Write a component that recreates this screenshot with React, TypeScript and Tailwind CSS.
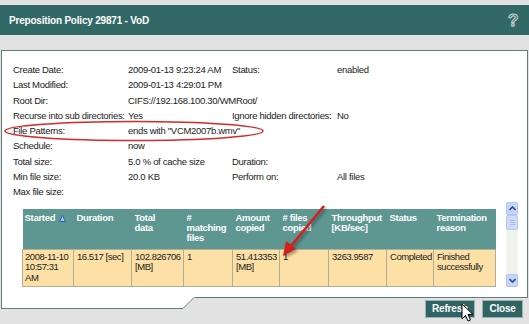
import React from "react";

const rows: [string, string, string, string][] = [
  ["Create Date:", "2009-01-13 9:23:24 AM", "Status:", "enabled"],
  ["Last Modified:", "2009-01-13 4:29:01 PM", "", ""],
  ["Root Dir:", "CIFS://192.168.100.30/WMRoot/", "", ""],
  ["Recurse into sub directories:", "Yes", "Ignore hidden directories:", "No"],
  ["File Patterns:", "ends with \"VCM2007b.wmv\"", "", ""],
  ["Schedule:", "now", "", ""],
  ["Total size:", "5.0 % of cache size", "Duration:", ""],
  ["Min file size:", "20.0 KB", "Perform on:", "All files"],
  ["Max file size:", "", "", ""],
];

const cols = [51, 58, 52, 49, 47, 49, 58, 47, 62];

const headers: React.ReactNode[] = [
  <span className="inline-flex items-start gap-[4px]">
    Started
    <svg width="7" height="7" viewBox="0 0 7 7" className="mt-[2px]">
      <polygon points="3.5,0.5 6.5,6.5 0.5,6.5" fill="#a9c3ea" stroke="#2f5fb0" strokeWidth="1" />
    </svg>
  </span>,
  "Duration",
  <>Total<br />data</>,
  <>#<br />matching<br />files</>,
  <>Amount<br />copied</>,
  <># files<br />copied</>,
  <>Throughput<br />[KB/sec]</>,
  "Status",
  <>Termination<br />reason</>,
];

const data: React.ReactNode[] = [
  <>2008-11-10<br />10:57:31<br />AM</>,
  "16.517 [sec]",
  <>102.826706<br />[MB]</>,
  "1",
  <>51.413353<br />[MB]</>,
  "1",
  "3263.9587",
  "Completed",
  <>Finished<br />successfully</>,
];

function Chevron({ up }: { up: boolean }) {
  return (
    <svg width="7" height="5" viewBox="0 0 7 5">
      <polyline
        points={up ? "0.5,4 3.5,1 6.5,4" : "0.5,1 3.5,4 6.5,1"}
        fill="none"
        stroke="#2b4c9c"
        strokeWidth="1.6"
      />
    </svg>
  );
}

export default function App() {
  return (
    <div className="relative w-[529px] h-[324px] overflow-hidden bg-[#e2e2e2] font-['Liberation_Sans',Arial,sans-serif] text-[9.5px] tracking-[-0.3px] text-[#222]">
      <div className="h-[5px]" />
      <div className="h-[30px] bg-[#326866] flex items-center justify-between pl-[9px] pr-[11px]">
        <span className="text-white font-bold text-[10px] tracking-[-0.2px]">Preposition Policy 29871 - VoD</span>
        <span className="text-[17px] font-bold leading-none text-transparent [-webkit-text-stroke:1px_#c9d4d4]">?</span>
      </div>
      <div className="h-[15px]" />
      <div className="ml-[1px] w-[527px] h-[247px] bg-white border-l border-t border-r border-[#5f7c7b] pt-[11px] pl-[11px]">
        <div className="grid grid-cols-[115px_104px_105px_1fr]">
          {rows.map((r, i) => (
            <React.Fragment key={i}>
              {r.map((c, j) => (
                <div key={j} className="h-[15.25px] leading-[15.25px] whitespace-nowrap">
                  {c}
                </div>
              ))}
            </React.Fragment>
          ))}
        </div>
        <div className="flex items-start mt-[3px] ml-[9px]">
          <table className="table-fixed border-collapse w-[473px] mt-[7px]">
            <colgroup>
              {cols.map((w, i) => (
                <col key={i} style={{ width: w }} />
              ))}
            </colgroup>
            <thead>
              <tr className="h-[40px] bg-[#5e9691]">
                {headers.map((h, i) => (
                  <th
                    key={i}
                    className={`align-top text-left font-bold text-white text-[9.5px] tracking-[-0.3px] leading-[10px] pt-[4px] ${i === 0 ? "pl-[2px]" : "pl-[3px]"} pr-0 whitespace-nowrap`}
                  >
                    {h}
                  </th>
                ))}
              </tr>
            </thead>
            <tbody>
              <tr className="h-[37px] bg-[#fde0a5]">
                {data.map((d, i) => (
                  <td
                    key={i}
                    className={`align-top text-left text-[9.5px] tracking-[-0.45px] leading-[10.7px] pt-[2px] ${i === 0 ? "pl-[2px]" : "pl-[3px]"} border border-[#aeae9a] whitespace-nowrap overflow-hidden`}
                  >
                    {d}
                  </td>
                ))}
              </tr>
            </tbody>
          </table>
          <div className="ml-[10px] w-[12px] h-[85px] bg-[#f3f3ee] flex flex-col">
            <div className="h-[13px] rounded-[2px] bg-[#c6d6f6] border border-[#b3c6ef] flex items-center justify-center">
              <Chevron up />
            </div>
            <div className="h-[15px] rounded-[2px] bg-[#cddbf8] border border-[#b6c8f0] flex flex-col items-center justify-center gap-[1px]">
              <div className="w-[5px] h-px bg-[#a9bde8]" />
              <div className="w-[5px] h-px bg-[#a9bde8]" />
              <div className="w-[5px] h-px bg-[#a9bde8]" />
            </div>
            <div className="flex-1" />
            <div className="h-[13px] rounded-[2px] bg-[#c6d6f6] border border-[#b3c6ef] flex items-center justify-center">
              <Chevron up={false} />
            </div>
          </div>
        </div>
      </div>
      <div className="flex h-[27px]">
        <div className="ml-[1px] w-[182px] h-[12px] bg-white border-l border-b border-[#5f7c7b]" />
        <svg width="12" height="12" viewBox="0 0 12 12" className="block">
          <polygon points="0,0 12,0 0,12" fill="#ffffff" />
          <line x1="0" y1="11.5" x2="11.5" y2="0" stroke="#5f7c7b" strokeWidth="1" />
        </svg>
        <div className="flex-1 mr-[1px] border-t border-[#5f7c7b] flex justify-end items-start pt-[2px] pr-[5px] gap-[7px]">
          <button className="w-[50px] h-[18px] bg-[#2e6462] border border-[#9fb3b2] text-white font-bold text-[10px] tracking-[-0.2px] leading-none flex items-center justify-center">
            Refresh
          </button>
          <button className="w-[41px] h-[18px] bg-[#2e6462] border border-[#9fb3b2] text-white font-bold text-[10px] tracking-[-0.2px] leading-none flex items-center justify-center">
            Close
          </button>
        </div>
      </div>

      <svg className="absolute left-0 top-0 pointer-events-none" width="529" height="324" viewBox="0 0 529 324">
        <ellipse cx="134" cy="131" rx="129" ry="9.5" fill="none" stroke="#d42a2a" strokeWidth="1.5" />
        <g style={{ filter: "drop-shadow(2px 2px 1.5px rgba(0,0,0,0.35))" }}>
          <line x1="324" y1="206" x2="291" y2="246" stroke="#d41f1f" strokeWidth="2.6" />
          <polygon points="283,256 286,241 296,249" fill="#d41f1f" />
        </g>
        <path
          d="M462 304 L462 319 L465.5 315.5 L468 321 L470.5 320 L468 314.5 L473 314.5 Z"
          fill="#ffffff"
          stroke="#000000"
          strokeWidth="1"
          strokeLinejoin="round"
        />
      </svg>
    </div>
  );
}
